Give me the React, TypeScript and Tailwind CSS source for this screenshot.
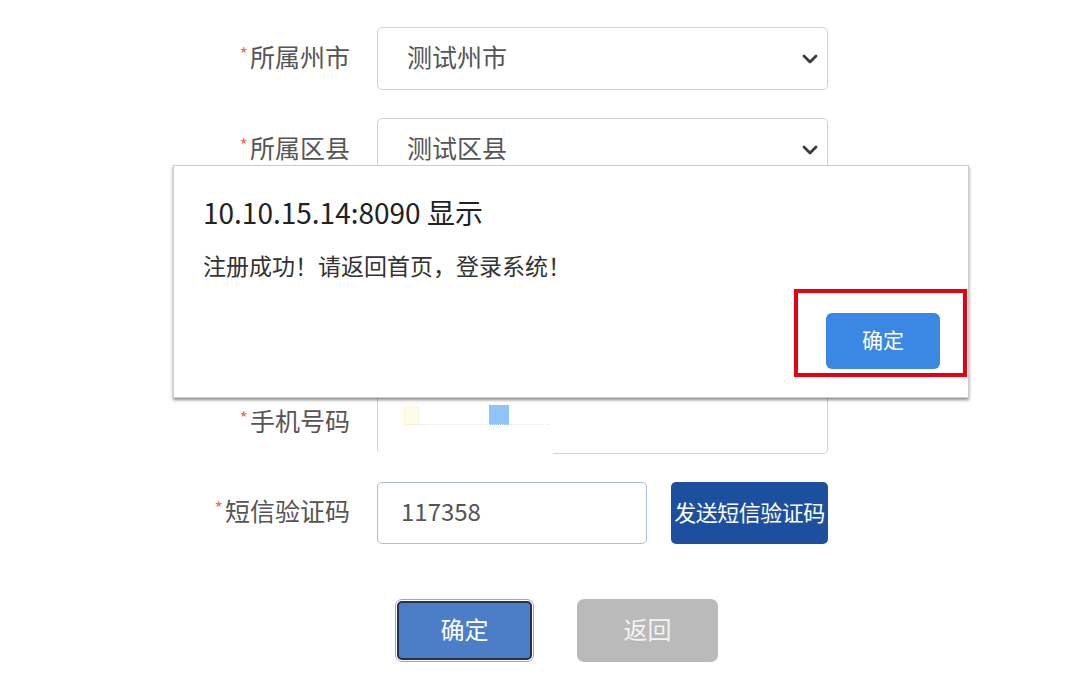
import React from "react";

const FONT = { fontFamily: '"Noto Sans CJK SC", "Noto Sans", sans-serif' };

function Chevron() {
  return (
    <svg width="16" height="10" viewBox="0 0 16 10" className="shrink-0">
      <path d="M2 2 L8 8 L14 2" fill="none" stroke="#3a3a3a" strokeWidth="2.8" strokeLinecap="round" strokeLinejoin="round" />
    </svg>
  );
}

function Label({ text }: { text: string }) {
  return (
    <div className="w-[350px] shrink-0 text-right text-[25px] leading-none text-[#555] pb-[5px]">
      <span className="text-[#e8705f] text-[18px] align-top mr-[2px]">*</span>
      {text}
    </div>
  );
}

function SelectBox({ value }: { value: string }) {
  return (
    <div className="ml-[27px] w-[451px] h-[63px] border border-[#d2d2d2] rounded-[5px] flex items-center justify-between pl-[29px] pr-[9px] bg-white">
      <span className="text-[25px] text-[#555] leading-none pb-[5px]">{value}</span>
      <Chevron />
    </div>
  );
}

function Row({ children }: { children: React.ReactNode }) {
  return <div className="flex items-center h-[63px] mb-[28px]">{children}</div>;
}

export default function App() {
  return (
    <div className="relative w-[1080px] h-[697px] bg-white overflow-hidden" style={FONT}>
      <div className="flex flex-col pt-[27px]">
        <Row>
          <Label text="所属州市" />
          <SelectBox value="测试州市" />
        </Row>
        <Row>
          <Label text="所属区县" />
          <SelectBox value="测试区县" />
        </Row>
        <Row>
          <div className="w-[350px] shrink-0" />
          <div className="ml-[27px] w-[451px] h-[63px] border border-[#d2d2d2] rounded-[5px]" />
        </Row>
        <Row>
          <div className="w-[350px] shrink-0" />
          <div className="ml-[27px] w-[451px] h-[63px] border border-[#d2d2d2] rounded-[5px]" />
        </Row>
        <Row>
          <Label text="手机号码" />
          <div className="ml-[27px] w-[451px] h-[62px] border border-[#d2d2d2] rounded-[5px]" />
        </Row>
        <div className="flex items-center h-[62px]">
          <Label text="短信验证码" />
          <div className="ml-[27px] w-[270px] h-[62px] border border-[#a9bfd6] rounded-[5px] flex items-center pl-[23px] pb-[5px] text-[24px] leading-none text-[#555]">
            117358
          </div>
          <div className="ml-[24px] w-[157px] h-[62px] bg-[#1d4f9f] rounded-[5px] flex items-center justify-center pb-[4px] text-[22px] leading-none text-white tracking-[-0.5px]">
            发送短信验证码
          </div>
        </div>
        <div className="flex pl-[395px] mt-[55px] gap-[43px]">
          <div className="w-[139px] h-[63px] rounded-[7px] border border-[#9aa8bd] p-[1px]">
            <div className="w-full h-full rounded-[5px] border-2 border-[#26324a] bg-[#4b7ec7] flex items-center justify-center pb-[4px] text-[24px] leading-none text-white">
              确定
            </div>
          </div>
          <div className="w-[141px] h-[63px] rounded-[7px] bg-[#bababa] flex items-center justify-center pb-[4px] text-[24px] leading-none text-[#f4f4f4]">
            返回
          </div>
        </div>
      </div>

      {/* privacy mask over phone number */}
      <div className="absolute left-[379px] top-[394px] w-[198px] h-[50px] bg-white" />
      <div className="absolute left-[379px] top-[440px] w-[174px] h-[16px] bg-white" />
      <div className="absolute left-[402px] top-[406px] w-[18px] h-[20px] bg-[#fbfbe6]" />
      <div className="absolute left-[489px] top-[405px] w-[20px] h-[20px] bg-[#8ec4fb] blur-[0.6px]" />
      <div className="absolute left-[405px] top-[424px] w-[145px] h-[1px] border-t border-dotted border-[#e6e6e6]" />

      {/* alert dialog */}
      <div className="absolute left-[173px] top-[165px] w-[796px] h-[233px] bg-white border border-[#cfcfcf] shadow-[0_2px_3px_rgba(0,0,0,0.45)]">
        <div className="pl-[29px] pt-[32px] text-[28px] leading-none text-[#222]">10.10.15.14:8090 显示</div>
        <div className="pl-[29px] mt-[28px] text-[23px] leading-none text-[#333]">注册成功！请返回首页，登录系统！</div>
        <div className="absolute left-[620px] top-[123px] w-[173px] h-[88px] border-[4px] border-[#e60012]" />
        <div className="absolute left-[652px] top-[147px] w-[114px] h-[56px] rounded-[6px] bg-[#3b87e4] flex items-center justify-center pb-[3px] text-[21px] leading-none text-white">
          确定
        </div>
      </div>
    </div>
  );
}
